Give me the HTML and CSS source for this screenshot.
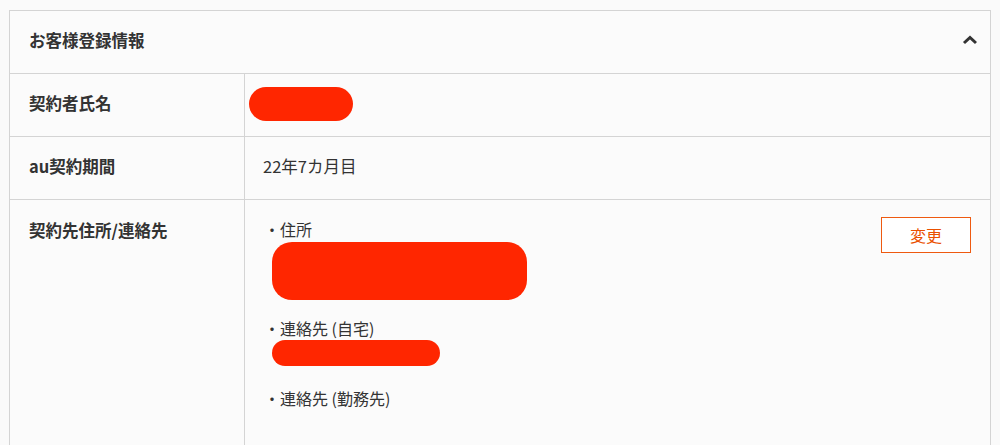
FILE: index.html
```html
<!DOCTYPE html>
<html lang="ja">
<head>
    <meta charset="UTF-8">
    <meta name="viewport" content="width=device-width, initial-scale=1.0">
    <title>お客様登録情報</title>
    <link rel="stylesheet" href="styles.css">
</head>
<body>
    <div class="info-panel">
        <div class="panel-header">
            <h2>お客様登録情報</h2>
            <svg class="chevron" width="16" height="10" viewBox="0 0 16 10">
                <path d="M2 8 L8 2.5 L14 8" fill="none" stroke="#333" stroke-width="3"/>
            </svg>
        </div>
        <div class="info-row">
            <div class="row-label">契約者氏名</div>
            <div class="row-value">
                <span class="mask mask-name"></span>
            </div>
        </div>
        <div class="info-row">
            <div class="row-label">au契約期間</div>
            <div class="row-value value-text">22年7カ月目</div>
        </div>
        <div class="info-row row-tall">
            <div class="row-label">契約先住所/連絡先</div>
            <div class="row-value contact-value">
                <div class="contact-list">
                    <div class="contact-item">
                        <p>・住所</p>
                        <span class="mask mask-address"></span>
                    </div>
                    <div class="contact-item">
                        <p>・連絡先 (自宅)</p>
                        <span class="mask mask-phone"></span>
                    </div>
                    <div class="contact-item item-last">
                        <p>・連絡先 (勤務先)</p>
                    </div>
                </div>
                <button class="change-btn">変更</button>
            </div>
        </div>
    </div>
</body>
</html>
```

FILE: styles.css
```css
body {
    margin: 0;
    padding: 10px 10px 0 9px;
    background: #fafafa;
    font-family: "Noto Sans CJK JP", "Noto Sans", sans-serif;
    color: #333333;
}
.info-panel {
    width: 980px;
    border: 1px solid #d4d4d4;
    border-bottom: none;
    background: #fbfbfb;
}
.panel-header {
    display: flex;
    align-items: center;
    justify-content: space-between;
    height: 62px;
    padding: 0 12px 0 19px;
    border-bottom: 1px solid #d4d4d4;
}
.panel-header h2 {
    margin: 0 0 4px;
    font-size: 16.5px;
    font-weight: bold;
}
.chevron {
    margin-top: -4px;
}
.info-row {
    display: flex;
    border-bottom: 1px solid #d4d4d4;
    min-height: 62px;
}
.row-label {
    width: 215px;
    padding: 0 0 4px 19px;
    border-right: 1px solid #d4d4d4;
    font-size: 16.5px;
    font-weight: bold;
    display: flex;
    align-items: center;
}
.row-value {
    flex: 1;
    display: flex;
    align-items: center;
    padding-left: 4px;
}
.value-text {
    padding: 0 0 4px 18px;
    font-size: 16.5px;
}
.mask {
    display: block;
    background: #ff2600;
}
.mask-name {
    width: 104px;
    height: 34px;
    border-radius: 17px;
    margin-top: -2px;
}
.row-tall {
    min-height: 260px;
    border-bottom: none;
}
.row-tall .row-label {
    align-items: flex-start;
    padding-top: 18px;
    height: 240px;
}
.contact-value {
    align-items: flex-start;
    justify-content: space-between;
    padding: 17px 19px 0 19px;
}
.contact-list {
    display: flex;
    flex-direction: column;
    gap: 16px;
}
.contact-item p {
    margin: 0;
    font-size: 16px;
    line-height: 24px;
}
.item-last {
    margin-top: 4px;
}
.mask-address {
    width: 255px;
    height: 58px;
    border-radius: 20px;
    margin: 1px 0 0 8px;
}
.mask-phone {
    width: 168px;
    height: 26px;
    border-radius: 13px;
    margin: 0 0 0 8px;
}
.change-btn {
    width: 90px;
    height: 36px;
    background: #ffffff;
    border: 1px solid #ee5a10;
    color: #ea5000;
    font-family: inherit;
    font-size: 16px;
    cursor: pointer;
}
```
